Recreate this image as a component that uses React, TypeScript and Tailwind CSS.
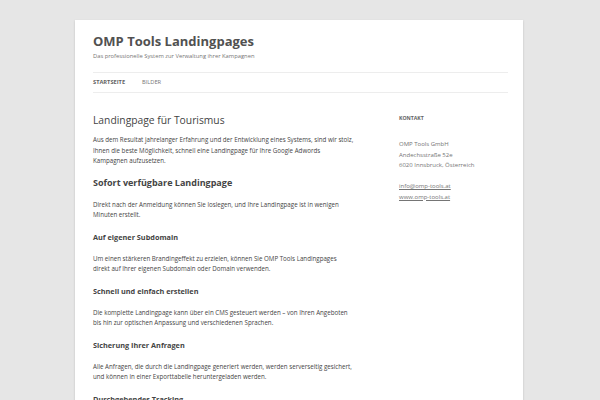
export default function App() {
  const font = { fontFamily: '"Open Sans", "Liberation Sans", sans-serif' };

  const sections = [
    {
      title: "Sofort verfügbare Landingpage",
      size: "text-[9px]",
      lines: ["Direkt nach der Anmeldung können Sie loslegen, und Ihre Landingpage ist in wenigen", "Minuten erstellt."],
    },
    {
      title: "Auf eigener Subdomain",
      size: "text-[7.3px]",
      lines: [
        "Um einen stärkeren Brandingeffekt zu erzielen, können Sie OMP Tools Landingpages",
        "direkt auf Ihrer eigenen Subdomain oder Domain verwenden.",
      ],
    },
    {
      title: "Schnell und einfach erstellen",
      size: "text-[7.3px]",
      lines: [
        "Die komplette Landingpage kann über ein CMS gesteuert werden – von Ihren Angeboten",
        "bis hin zur optischen Anpassung und verschiedenen Sprachen.",
      ],
    },
    {
      title: "Sicherung Ihrer Anfragen",
      size: "text-[7.3px]",
      lines: [
        "Alle Anfragen, die durch die Landingpage generiert werden, werden serverseitig gesichert,",
        "und können in einer Exporttabelle heruntergeladen werden.",
      ],
    },
    {
      title: "Durchgehendes Tracking",
      size: "text-[7.3px]",
      lines: ["Alle Besucher und Anfragen werden über Google Analytics und Adwords Conversion", "Tracking erfasst."],
    },
  ];

  return (
    <div className="h-[400px] w-[600px] overflow-hidden bg-[#e6e6e6] pt-5" style={font}>
      <div className="ml-[75px] min-h-[400px] w-[448px] bg-white pl-[18px] pr-[15px] shadow-[0_1px_2px_rgba(100,100,100,0.3)]">
        {/* Header */}
        <header className="pt-[13px]">
          <h1 className="text-[13px] font-bold leading-[16px] text-[#515151]">OMP Tools Landingpages</h1>
          <p className="mt-[2px] text-[5.8px] leading-[10px] text-[#757575]">
            Das professionelle System zur Verwaltung ihrer Kampagnen
          </p>
          <nav className="mt-[11px] flex h-[21px] items-center gap-[17px] border-y border-[#ededed] text-[5.7px] uppercase">
            <span className="font-bold text-[#636363]">Startseite</span>
            <span className="text-[#757575]">Bilder</span>
          </nav>
        </header>

        <div className="flex justify-between pt-5">
          {/* Content */}
          <main className="w-[270px] whitespace-nowrap text-[6.2px] leading-[10.5px] text-[#444]">
            <h2 className="text-[10.3px] leading-[14px] text-[#444]">Landingpage für Tourismus</h2>
            <p className="mt-[8px]">
              Aus dem Resultat jahrelanger Erfahrung und der Entwicklung eines Systems, sind wir stolz,
              <br />
              Ihnen die beste Möglichkeit, schnell eine Landingpage für Ihre Google Adwords
              <br />
              Kampagnen aufzusetzen.
            </p>
            {sections.map((s) => (
              <div key={s.title}>
                <h3 className={`mt-[10.5px] mb-[10.5px] ${s.size} font-bold leading-[12px] text-[#444]`}>{s.title}</h3>
                <p>
                  {s.lines[0]}
                  <br />
                  {s.lines[1]}
                </p>
              </div>
            ))}
          </main>

          {/* Sidebar */}
          <aside className="w-[109px] text-[6px] leading-[10.5px] text-[#757575]">
            <h4 className="text-[5.2px] font-bold uppercase leading-[10px] text-[#636363]">Kontakt</h4>
            <p className="mt-[16px]">
              OMP Tools GmbH
              <br />
              Andechsstraße 52e
              <br />
              6020 Innsbruck, Österreich
            </p>
            <p className="mt-[10.5px]">
              <a className="underline">info@omp-tools.at</a>
              <br />
              <a className="underline">www.omp-tools.at</a>
            </p>
          </aside>
        </div>
      </div>
    </div>
  );
}
